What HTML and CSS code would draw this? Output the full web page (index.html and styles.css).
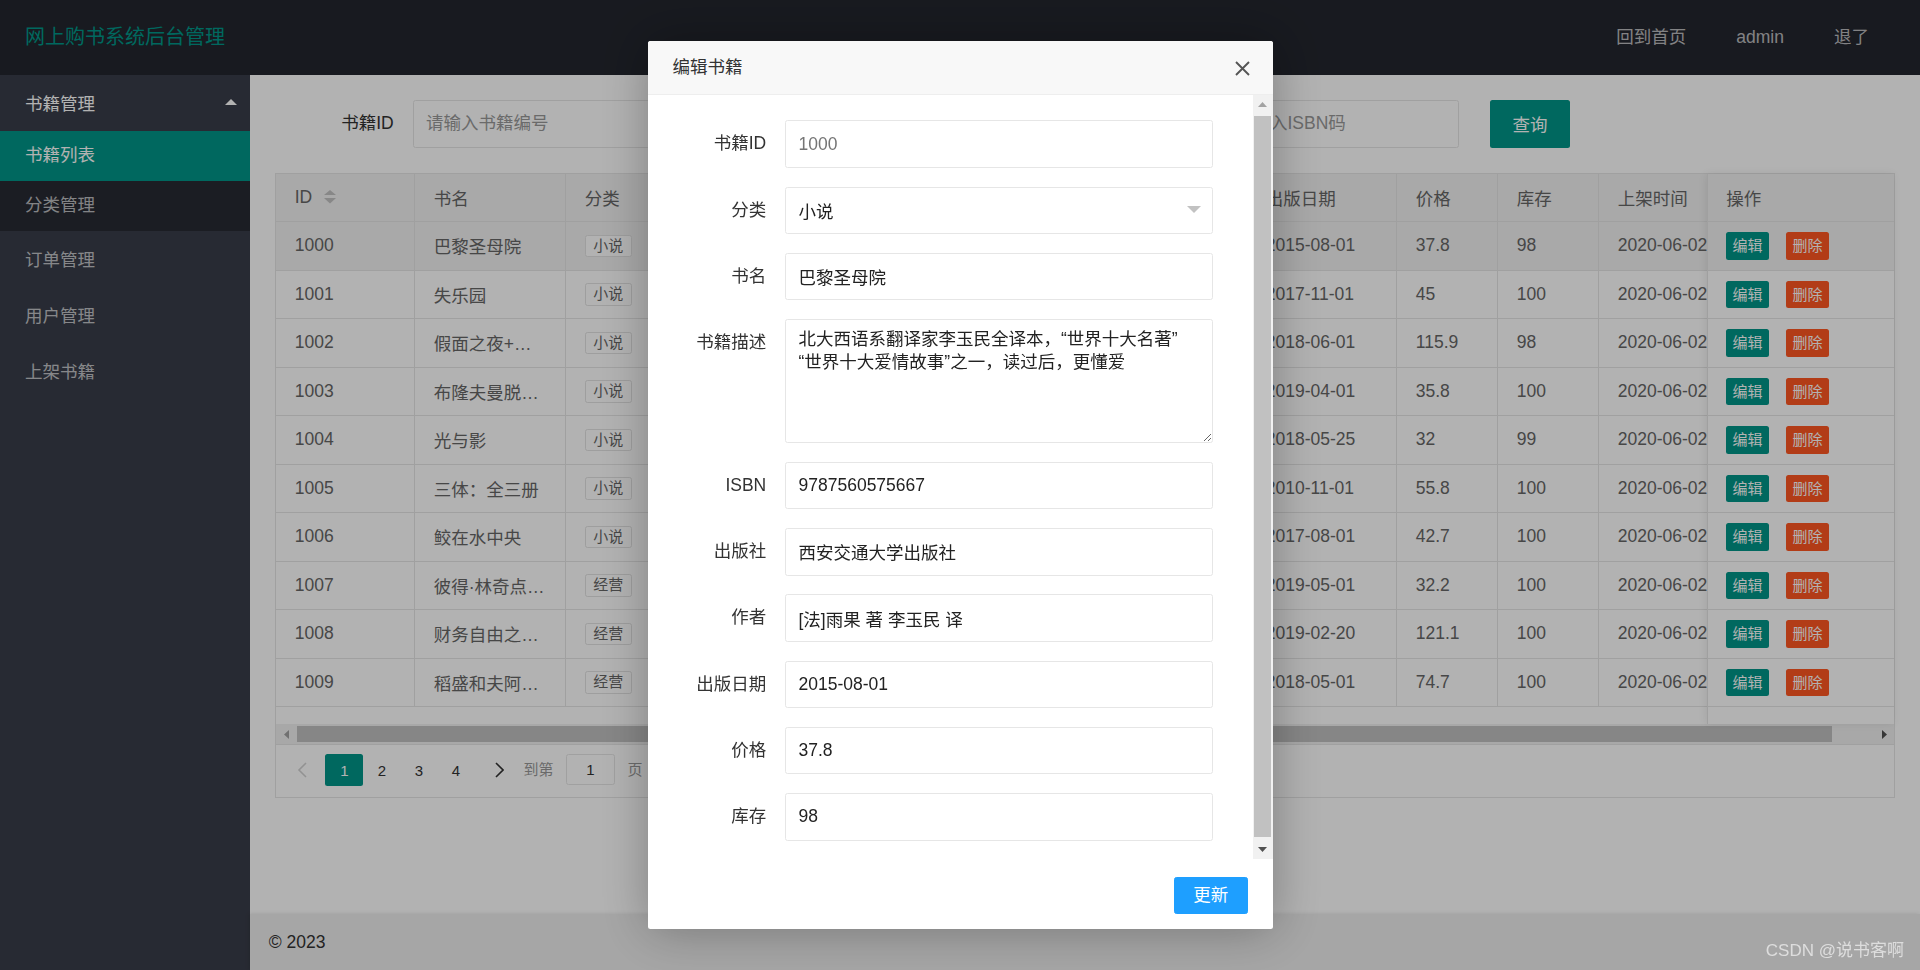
FILE: index.html
```html
<!DOCTYPE html>
<html lang="zh-CN">
<head>
<meta charset="utf-8">
<title>网上购书系统后台管理</title>
<link rel="stylesheet" href="styles.css">
</head>
<body>
<div class="app">
  <header class="topbar">
    <div class="logo">网上购书系统后台管理</div>
    <nav class="topnav">
      <a href="#">回到首页</a>
      <a href="#">admin</a>
      <a href="#">退了</a>
    </nav>
  </header>
  <div class="frame">
    <aside class="side">
      <ul class="menu">
        <li class="menu-item open">
          <a class="menu-link" href="#">书籍管理<span class="caret-up"></span></a>
          <ul class="submenu">
            <li><a class="sub-link active" href="#">书籍列表</a></li>
            <li><a class="sub-link" href="#">分类管理</a></li>
          </ul>
        </li>
        <li class="menu-item"><a class="menu-link" href="#">订单管理</a></li>
        <li class="menu-item"><a class="menu-link" href="#">用户管理</a></li>
        <li class="menu-item"><a class="menu-link" href="#">上架书籍</a></li>
      </ul>
    </aside>
    <div class="main">
      <section class="content">
        <form class="search">
          <div class="field">
            <label class="field-label">书籍ID</label>
            <input class="field-input" placeholder="请输入书籍编号">
          </div>
          <div class="field">
            <label class="field-label">书名</label>
            <input class="field-input" placeholder="请输入书名">
          </div>
          <div class="field last">
            <label class="field-label">ISBN</label>
            <input class="field-input" placeholder="请输入ISBN码">
          </div>
          <button type="button" class="btn-query">查询</button>
        </form>

        <div class="table-view">
          <div class="table-scroll">
            <table class="grid">
              <colgroup>
                <col style="width:139px"><col style="width:151px"><col style="width:100px"><col style="width:175px"><col style="width:200px"><col style="width:206px"><col style="width:150px"><col style="width:101px"><col style="width:101px"><col style="width:150px"><col style="width:188px">
              </colgroup>
              <thead>
                <tr>
                  <th><span class="th-id">ID<span class="sort"><svg width="12" height="14" viewBox="0 0 12 14"><path d="M0 5H12L6 0Z" fill="#c2c2c2"/><path d="M0 8H12L6 13.5Z" fill="#c2c2c2"/></svg></span></span></th>
                  <th>书名</th><th>分类</th><th>ISBN</th><th>出版社</th><th>作者</th><th>出版日期</th><th>价格</th><th>库存</th><th>上架时间</th><th>操作</th>
                </tr>
              </thead>
              <tbody>
                <tr class="hover"><td>1000</td><td>巴黎圣母院</td><td><span class="tag">小说</span></td><td>9787560575667</td><td>西安交通大学出版社</td><td>[法]雨果 著 李玉民 译</td><td>2015-08-01</td><td>37.8</td><td>98</td><td>2020-06-02</td><td></td></tr>
                <tr><td>1001</td><td>失乐园</td><td><span class="tag">小说</span></td><td>9787530215593</td><td>北京十月文艺出版社</td><td>[日]渡边淳一</td><td>2017-11-01</td><td>45</td><td>100</td><td>2020-06-02</td><td></td></tr>
                <tr><td>1002</td><td>假面之夜+假面饭店</td><td><span class="tag">小说</span></td><td>9787544293822</td><td>南海出版公司</td><td>[日]东野圭吾</td><td>2018-06-01</td><td>115.9</td><td>98</td><td>2020-06-02</td><td></td></tr>
                <tr><td>1003</td><td>布隆夫曼脱口秀</td><td><span class="tag">小说</span></td><td>9787544298148</td><td>南海出版公司</td><td>[美]布隆夫曼</td><td>2019-04-01</td><td>35.8</td><td>100</td><td>2020-06-02</td><td></td></tr>
                <tr><td>1004</td><td>光与影</td><td><span class="tag">小说</span></td><td>9787208150880</td><td>上海人民出版社</td><td>[美]黛博拉</td><td>2018-05-25</td><td>32</td><td>99</td><td>2020-06-02</td><td></td></tr>
                <tr><td>1005</td><td>三体：全三册</td><td><span class="tag">小说</span></td><td>9787229030933</td><td>重庆出版社</td><td>刘慈欣</td><td>2010-11-01</td><td>55.8</td><td>100</td><td>2020-06-02</td><td></td></tr>
                <tr><td>1006</td><td>鲛在水中央</td><td><span class="tag">小说</span></td><td>9787540480578</td><td>湖南文艺出版社</td><td>尾鱼</td><td>2017-08-01</td><td>42.7</td><td>100</td><td>2020-06-02</td><td></td></tr>
                <tr><td>1007</td><td>彼得·林奇点评版漫步华尔街</td><td><span class="tag">经营</span></td><td>9787521704983</td><td>中信出版社</td><td>[美]彼得·林奇</td><td>2019-05-01</td><td>32.2</td><td>100</td><td>2020-06-02</td><td></td></tr>
                <tr><td>1008</td><td>财务自由之路：7年内赚到你的第一个1000万</td><td><span class="tag">经营</span></td><td>9787559631794</td><td>北京联合出版公司</td><td>[德]博多·舍费尔</td><td>2019-02-20</td><td>121.1</td><td>100</td><td>2020-06-02</td><td></td></tr>
                <tr><td>1009</td><td>稻盛和夫阿米巴经营</td><td><span class="tag">经营</span></td><td>9787508670768</td><td>中信出版社</td><td>[日]稻盛和夫</td><td>2018-05-01</td><td>74.7</td><td>100</td><td>2020-06-02</td><td></td></tr>
              </tbody>
            </table>
          </div>

          <div class="fixed-right">
            <div class="fx-head">操作</div>
            <div class="fx-row hover"><a class="btn-xs edit" href="#">编辑</a><a class="btn-xs del" href="#">删除</a></div>
            <div class="fx-row"><a class="btn-xs edit" href="#">编辑</a><a class="btn-xs del" href="#">删除</a></div>
            <div class="fx-row"><a class="btn-xs edit" href="#">编辑</a><a class="btn-xs del" href="#">删除</a></div>
            <div class="fx-row"><a class="btn-xs edit" href="#">编辑</a><a class="btn-xs del" href="#">删除</a></div>
            <div class="fx-row"><a class="btn-xs edit" href="#">编辑</a><a class="btn-xs del" href="#">删除</a></div>
            <div class="fx-row"><a class="btn-xs edit" href="#">编辑</a><a class="btn-xs del" href="#">删除</a></div>
            <div class="fx-row"><a class="btn-xs edit" href="#">编辑</a><a class="btn-xs del" href="#">删除</a></div>
            <div class="fx-row"><a class="btn-xs edit" href="#">编辑</a><a class="btn-xs del" href="#">删除</a></div>
            <div class="fx-row"><a class="btn-xs edit" href="#">编辑</a><a class="btn-xs del" href="#">删除</a></div>
            <div class="fx-row"><a class="btn-xs edit" href="#">编辑</a><a class="btn-xs del" href="#">删除</a></div>
          </div>

          <div class="hscroll">
            <span class="hs-btn"><svg width="5" height="9" viewBox="0 0 5 9"><path d="M5 0V9L0 4.5Z" fill="#a3a3a3"/></svg></span>
            <span class="hs-thumb"></span>
            <span class="hs-space"></span>
            <span class="hs-btn"><svg width="5" height="9" viewBox="0 0 5 9"><path d="M0 0V9L5 4.5Z" fill="#505050"/></svg></span>
          </div>

          <div class="pager">
            <span class="pg-prev"><svg width="12" height="16" viewBox="0 0 12 16"><path d="M10 1L3 8L10 15" fill="none" stroke="#d2d2d2" stroke-width="1.6"/></svg></span>
            <span class="pg-curr">1</span>
            <a class="pg-num" href="#">2</a>
            <a class="pg-num" href="#">3</a>
            <a class="pg-num" href="#">4</a>
            <a class="pg-next" href="#"><svg width="10" height="16" viewBox="0 0 10 16"><path d="M2 1L9 8L2 15" fill="none" stroke="#333" stroke-width="1.6"/></svg></a>
            <span class="pg-skip">到第</span>
            <input class="pg-input" value="1">
            <span class="pg-skip page">页</span>
            <button type="button" class="pg-ok">确定</button>
            <span class="pg-count">共 40 条</span>
          </div>
        </div>
      </section>
      <footer class="footer">© 2023</footer>
    </div>
  </div>
</div>

<div class="shade"></div>

<div class="layer">
  <div class="layer-title">编辑书籍
    <a class="layer-close" href="#"><svg width="15" height="15" viewBox="0 0 15 15"><path d="M1 1L14 14M14 1L1 14" stroke="#555" stroke-width="1.9"/></svg></a>
  </div>
  <div class="layer-body">
    <form class="edit-form">
      <div class="row"><label class="row-label">书籍ID</label><input class="row-input" placeholder="1000"></div>
      <div class="row"><label class="row-label">分类</label>
        <div class="select"><input class="row-input" value="小说" readonly><svg class="edge" width="14" height="7" viewBox="0 0 14 7"><path d="M0 0H14L7 7Z" fill="#c2c2c2"/></svg></div>
      </div>
      <div class="row"><label class="row-label">书名</label><input class="row-input" value="巴黎圣母院"></div>
      <div class="row"><label class="row-label">书籍描述</label><textarea class="row-text">北大西语系翻译家李玉民全译本，“世界十大名著”“世界十大爱情故事”之一，读过后，更懂爱</textarea></div>
      <div class="row"><label class="row-label">ISBN</label><input class="row-input" value="9787560575667"></div>
      <div class="row"><label class="row-label">出版社</label><input class="row-input" value="西安交通大学出版社"></div>
      <div class="row"><label class="row-label">作者</label><input class="row-input" value="[法]雨果 著 李玉民 译"></div>
      <div class="row"><label class="row-label">出版日期</label><input class="row-input" value="2015-08-01"></div>
      <div class="row"><label class="row-label">价格</label><input class="row-input" value="37.8"></div>
      <div class="row"><label class="row-label">库存</label><input class="row-input" value="98"></div>
    </form>
    <div class="vscroll">
      <span class="vs-btn"><svg width="9" height="5" viewBox="0 0 9 5"><path d="M0 5H9L4.5 0Z" fill="#a3a3a3"/></svg></span>
      <span class="vs-thumb"></span>
      <span class="vs-btn"><svg width="9" height="5" viewBox="0 0 9 5"><path d="M0 0H9L4.5 5Z" fill="#505050"/></svg></span>
    </div>
  </div>
  <div class="layer-foot">
    <a class="btn-update" href="#">更新</a>
  </div>
</div>

<div class="watermark">CSDN @说书客啊</div>
</body>
</html>
```

FILE: styles.css
```css
* { box-sizing: border-box; }
html, body { margin: 0; height: 100%; }
body {
  font-family: "Liberation Sans", Arial, "Noto Sans CJK SC", sans-serif;
  font-size: 17.5px;
  color: #333;
  background: #fff;
  overflow: hidden;
}
a { color: inherit; text-decoration: none; }
ul { list-style: none; margin: 0; padding: 0; }
input, textarea, button { font-family: inherit; }

.app { display: flex; flex-direction: column; height: 100vh; }

/* header */
.topbar {
  flex: none;
  height: 75px;
  background: #23262e;
  display: flex;
  justify-content: space-between;
  align-items: center;
}
.logo {
  width: 250px;
  padding-left: 25px;
  font-size: 20px;
  line-height: 75px;
  color: #009688;
}
.topnav { display: flex; margin-right: 26px; }
.topnav a {
  padding: 0 25px;
  line-height: 75px;
  color: rgba(255,255,255,.7);
}

/* frame */
.frame { flex: 1; display: flex; min-height: 0; }
.side { flex: none; width: 250px; background: #393d49; }
.menu-link {
  display: flex;
  justify-content: space-between;
  align-items: center;
  height: 56.25px;
  padding: 0 13px 2px 25px;
  color: rgba(255,255,255,.7);
}
.menu-item.open > .menu-link { color: #fff; }
.caret-up {
  width: 0; height: 0;
  border-style: solid;
  border-width: 0 6.5px 6.7px;
  border-color: transparent transparent #fff;
}
.submenu { background: rgba(0,0,0,.3); }
.sub-link {
  display: block;
  height: 50px;
  line-height: 48px;
  padding-left: 25px;
  color: rgba(255,255,255,.7);
}
.sub-link.active { background: #009688; color: #fff; }

.main { flex: 1; min-width: 0; display: flex; flex-direction: column; }
.content { flex: 1; min-height: 0; padding: 25px 25px 0; }
.footer {
  flex: none;
  height: 56px;
  line-height: 56px;
  padding-left: 18.75px;
  background: #eee;
  color: #333;
  box-shadow: -1px 0 4px rgba(0,0,0,.12);
}

/* search form */
.search {
  display: flex;
  align-items: center;
  height: 47.5px;
  margin: 0 0 25px;
  padding-left: 37.5px;
}
.field { display: flex; margin-right: 67px; }
.field.last { margin-right: 31px; }
.field-label {
  width: 100px;
  padding-right: 18.75px;
  text-align: right;
  line-height: 47.5px;
  color: #333;
}
.field-input {
  width: 237.5px;
  height: 47.5px;
  padding: 0 12.5px;
  border: 1px solid #e6e6e6;
  border-radius: 2.5px;
  font-size: 17.5px;
  color: #333;
  outline: none;
}
.field-input::placeholder { color: #999; }
.btn-query {
  width: 80px;
  height: 47.5px;
  border: 0;
  border-radius: 2.5px;
  background: #009688;
  color: #fff;
  font-size: 17.5px;
}

/* table */
.table-view { position: relative; border: 1px solid #e6e6e6; background: #fff; }
.table-scroll { height: 550.5px; overflow: hidden; }
.grid {
  width: 1661px;
  table-layout: fixed;
  border-collapse: separate;
  border-spacing: 0;
}
.grid th, .grid td {
  height: 48.5px;
  padding: 0 18.75px;
  border-right: 1px solid #e6e6e6;
  border-bottom: 1px solid #e6e6e6;
  text-align: left;
  font-weight: normal;
  color: #666;
  white-space: nowrap;
  overflow: hidden;
  text-overflow: ellipsis;
}
.grid th { background: #f2f2f2; }
.grid tr.hover td { background: #f2f2f2; }
.th-id { display: inline-flex; align-items: center; }
.sort { display: inline-flex; margin-left: 12px; }
.tag {
  display: inline-block;
  height: 22.5px;
  line-height: 20.5px;
  padding: 0 7.5px;
  border: 1px solid #e2e2e2;
  border-radius: 2.5px;
  background: #fff;
  font-size: 15px;
  color: #666;
}

.fixed-right {
  position: absolute;
  top: 0;
  right: 0;
  width: 187.5px;
  height: 550.5px;
  background: #fff;
  border-left: 1px solid #e6e6e6;
  box-shadow: -1px 0 8px rgba(0,0,0,.08);
}
.fx-head, .fx-row {
  height: 48.5px;
  display: flex;
  align-items: center;
  gap: 17.5px;
  padding-left: 18.75px;
  border-bottom: 1px solid #e6e6e6;
  color: #666;
}
.fx-head { background: #f2f2f2; }
.fx-row.hover { background: #f2f2f2; }
.btn-xs {
  display: inline-block;
  height: 27.5px;
  line-height: 27.5px;
  padding: 0 6.25px;
  border-radius: 2.5px;
  font-size: 15px;
  color: #fff;
}
.btn-xs.edit { background: #009688; }
.btn-xs.del { background: #ff5722; }

.hscroll { display: flex; height: 20px; background: #f1f1f1; }
.hs-btn {
  flex: none;
  width: 20px;
  display: flex;
  align-items: center;
  justify-content: center;
}
.hs-thumb { flex: none; width: 1535px; margin: 2px 0 2px 1px; background: #c1c1c1; }
.hs-space { flex: 1; }

.pager {
  display: flex;
  align-items: flex-start;
  height: 52.5px;
  padding: 8.75px 0 0 7.5px;
  border-top: 1px solid #e6e6e6;
  font-size: 15px;
  color: #333;
}
.pg-prev, .pg-curr, .pg-num, .pg-next {
  height: 32.5px;
  display: flex;
  align-items: center;
  justify-content: center;
}
.pg-prev { width: 36px; margin-right: 5.7px; }
.pg-curr { width: 38.3px; background: #009688; color: #fff; border-radius: 2.5px; }
.pg-num { width: 37px; }
.pg-next { width: 49px; }
.pg-skip { line-height: 32.5px; color: #999; }
.pg-skip.page { margin-left: 12.3px; }
.pg-input {
  width: 49.4px;
  height: 31px;
  margin-left: 12.3px;
  border: 1px solid #e6e6e6;
  border-radius: 2.5px;
  text-align: center;
  font-size: 15px;
  color: #333;
}
.pg-ok {
  height: 32.5px;
  margin-left: 12.5px;
  padding: 0 12.5px;
  border: 1px solid #e6e6e6;
  border-radius: 2.5px;
  background: #fff;
  font-size: 15px;
  color: #333;
}
.pg-count { margin-left: 12.5px; line-height: 32.5px; color: #666; }

/* shade & layer */
.shade { position: fixed; inset: 0; background: rgba(0,0,0,.3); z-index: 10; }
.layer {
  position: fixed;
  left: calc(50% - 312.5px);
  top: calc(50% - 443.75px);
  width: 625px;
  height: 887.5px;
  z-index: 11;
  background: #fff;
  border-radius: 2.5px;
  box-shadow: 1px 1px 50px rgba(0,0,0,.3);
  display: flex;
  flex-direction: column;
  overflow: hidden;
}
.layer-title {
  position: relative;
  flex: none;
  height: 53.5px;
  padding: 0 80px 0 25px;
  line-height: 52.5px;
  background: #f8f8f8;
  border-bottom: 1px solid #eee;
  color: #333;
}
.layer-close { position: absolute; right: 22.5px; top: 19.75px; width: 15px; height: 15px; display: flex; }
.layer-body { flex: 1; min-height: 0; display: flex; }
.edit-form { flex: 1; min-width: 0; padding-top: 25.5px; overflow: hidden; }
.row { display: flex; margin-bottom: 18.75px; }
.row-label {
  flex: none;
  width: 137.5px;
  padding-right: 18.75px;
  text-align: right;
  line-height: 47.5px;
  color: #333;
}
.row-input {
  width: 427.5px;
  height: 47.5px;
  padding: 0 12.5px;
  border: 1px solid #e6e6e6;
  border-radius: 2.5px;
  font-size: 17.5px;
  color: #222;
  outline: none;
}
.row-input::placeholder { color: #757575; }
.select { position: relative; width: 427.5px; }
.select .edge { position: absolute; right: 11.5px; top: 19.5px; }
.row-text {
  width: 427.5px;
  height: 124px;
  padding: 8px 16px 7.5px 12.5px;
  border: 1px solid #e6e6e6;
  border-radius: 2.5px;
  font-size: 17.5px;
  line-height: 23.3px;
  color: #222;
  resize: vertical;
  outline: none;
}
.vscroll {
  flex: none;
  width: 20px;
  display: flex;
  flex-direction: column;
  background: #f1f1f1;
}
.vs-btn { flex: none; height: 20px; display: flex; align-items: center; justify-content: center; }
.vs-thumb { flex: 1; margin: 1px 1.5px 2px; background: #c1c1c1; }
.layer-foot {
  flex: none;
  height: 69.5px;
  padding: 17.5px 24.5px 0;
  display: flex;
  justify-content: flex-end;
  align-items: flex-start;
}
.btn-update {
  height: 37.5px;
  line-height: 35.5px;
  padding: 0 18.75px;
  border: 1px solid #1e9fff;
  border-radius: 2.5px;
  background: #1e9fff;
  color: #fff;
}

.watermark {
  position: fixed;
  right: 16px;
  bottom: 9px;
  z-index: 12;
  font-size: 17px;
  line-height: 20px;
  color: rgba(255,255,255,.62);
}
```
